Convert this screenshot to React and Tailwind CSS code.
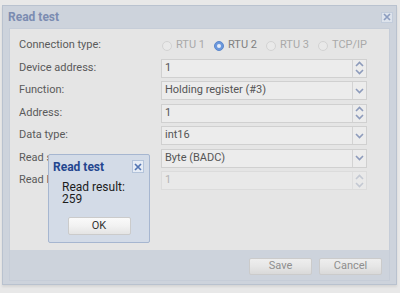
import React from 'react';

const font = { fontFamily: 'Roboto, "Liberation Sans", Arial, sans-serif' };

const ChevronUp = ({ color = '#8d9bbb' }) => (
  <svg width="9" height="6" viewBox="0 0 9 6" fill="none">
    <path d="M1 5L4.5 1.5L8 5" stroke={color} strokeWidth="1.6" />
  </svg>
);

const ChevronDown = ({ color = '#8d9bbb' }) => (
  <svg width="9" height="6" viewBox="0 0 9 6" fill="none">
    <path d="M1 1L4.5 4.5L8 1" stroke={color} strokeWidth="1.6" />
  </svg>
);

const CloseBox = ({ className, color }) => (
  <div className={className}>
    <svg width="8" height="8" viewBox="0 0 8 8">
      <path d="M1 1L7 7M7 1L1 7" stroke={color} strokeWidth="1.7" />
    </svg>
  </div>
);

const Radio = ({ label, checked }) => (
  <div className="flex items-center gap-[4px] w-[52px]">
    {checked ? (
      <div className="w-[10px] h-[10px] rounded-full bg-[#6b98dd] border border-[#5c88cc] flex items-center justify-center">
        <div className="w-[4px] h-[4px] rounded-full bg-[#e6edf8]" />
      </div>
    ) : (
      <div className="w-[10px] h-[10px] rounded-full bg-[#e9e9e9] border border-[#d3d3d3]" />
    )}
    <span className={checked ? 'text-[#808080]' : 'text-[#a9a9a9]'}>{label}</span>
  </div>
);

const Field = ({ value, kind, disabled }) => (
  <div
    className={`w-[206px] h-[19px] flex border ${
      disabled ? 'border-[#dcdcdc] bg-[#e9e9e9]' : 'border-[#d0d0d0] bg-[#ececec]'
    }`}
  >
    <div className={`flex-1 flex items-center pl-[3px] ${disabled ? 'text-[#b4b4b4]' : 'text-[#555]'}`}>
      {value}
    </div>
    <div
      className={`w-[14px] border-l flex flex-col items-center justify-center gap-[2px] ${
        disabled ? 'border-[#dedede]' : 'border-[#d3d3d3]'
      }`}
    >
      {kind === 'spin' ? (
        <>
          <ChevronUp color={disabled ? '#c3c8d2' : '#8d9bbb'} />
          <ChevronDown color={disabled ? '#c3c8d2' : '#8d9bbb'} />
        </>
      ) : (
        <ChevronDown />
      )}
    </div>
  </div>
);

const rows = [
  { label: 'Device address:', value: '1', kind: 'spin' },
  { label: 'Function:', value: 'Holding register (#3)', kind: 'select' },
  { label: 'Address:', value: '1', kind: 'spin' },
  { label: 'Data type:', value: 'int16', kind: 'select' },
  { label: 'Read swap:', value: 'Byte (BADC)', kind: 'select' },
  { label: 'Read length:', value: '1', kind: 'spin', disabled: true },
];

const Button = ({ children, className = '', text = 'text-[#8e8e8e]' }) => (
  <div
    className={`w-[63px] h-[17px] rounded-[2px] border border-[#cbcbcb] bg-gradient-to-b from-[#eeeeee] via-[#e6e6e6] to-[#d9d9d9] flex items-center justify-center ${text} ${className}`}
  >
    {children}
  </div>
);

export default function App() {
  return (
    <div className="relative w-[400px] h-[293px] bg-[#e8e8e8] text-[11px] overflow-hidden" style={font}>
      <div className="ml-[2px] mt-[5px] w-[395px] h-[280px] border border-[#b9c2cf] bg-[#cdd3dc] flex flex-col shadow-[0_2px_2px_rgba(0,0,0,0.08)]">
        <div className="h-[22px] flex items-center justify-between pl-[5px] pr-[3px]">
          <span className="font-bold text-[12px] text-[#7b8cb1]">Read test</span>
          <CloseBox
            className="w-[12px] h-[11px] border border-[#c2ccdb] bg-[#dde3ec] flex items-center justify-center"
            color="#8c9dc0"
          />
        </div>
        <div className="mx-[6px] mb-[3px] flex-1 border border-[#c6cdd8] flex flex-col">
          <div className="h-[221px] bg-[#e5e5e5] pl-[9px] pt-[7px] flex flex-col gap-[3.5px]">
            <div className="h-[19px] flex items-center">
              <div className="w-[142px] text-[#5a5a5a]">Connection type:</div>
              <div className="flex items-center ml-[1px]">
                <Radio label="RTU 1" />
                <Radio label="RTU 2" checked />
                <Radio label="RTU 3" />
                <Radio label="TCP/IP" />
              </div>
            </div>
            {rows.map((r) => (
              <div key={r.label} className="h-[19px] flex items-center">
                <div className="w-[142px] text-[#5a5a5a]">{r.label}</div>
                <Field value={r.value} kind={r.kind} disabled={r.disabled} />
              </div>
            ))}
          </div>
          <div className="flex-1 flex justify-end items-start pt-[8px] pr-[7px] gap-[7px]">
            <Button>Save</Button>
            <Button>Cancel</Button>
          </div>
        </div>
      </div>

      <div className="absolute left-[48px] top-[154px] w-[102px] h-[89px] rounded-[2px] border border-[#a6b6d0] bg-[#d3dbe7] flex flex-col">
        <div className="h-[23px] flex items-center justify-between pl-[4px] pr-[5px]">
          <span className="font-bold text-[12px] text-[#23468f]">Read test</span>
          <CloseBox
            className="w-[12px] h-[13px] border border-[#b3c3da] bg-[#e6ecf5] flex items-center justify-center"
            color="#5375b3"
          />
        </div>
        <div className="pl-[13px] pt-[3px] leading-[12px] text-[12px] text-[#1c1c1c]">
          <div>Read result:</div>
          <div>259</div>
        </div>
        <div className="flex justify-center mt-[12px]">
          <Button className="w-[63px] h-[18px] border-[#c2c2c2] from-[#fafafa] via-[#f2f2f2] to-[#e4e4e4]" text="text-[#333]">
            OK
          </Button>
        </div>
      </div>
    </div>
  );
}
